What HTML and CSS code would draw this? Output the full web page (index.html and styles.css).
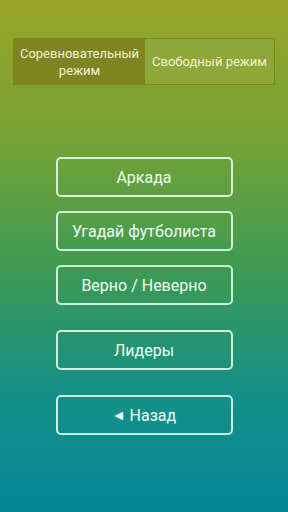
FILE: index.html
```html
<!DOCTYPE html>
<html lang="ru">
<head>
    <meta charset="UTF-8">
    <meta name="viewport" content="width=device-width, initial-scale=1.0">
    <title>Меню</title>
    <link rel="stylesheet" href="styles.css">
</head>
<body>
<div id="screen">
    <div id="modeSwitch">
        <button type="button" class="mode active">Соревновательный режим</button>
        <button type="button" class="mode">Свободный режим</button>
    </div>
    <div id="menu">
        <div class="group">
            <button type="button" class="btn">Аркада</button>
            <button type="button" class="btn">Угадай футболиста</button>
            <button type="button" class="btn">Верно / Неверно</button>
        </div>
        <div class="group">
            <button type="button" class="btn">Лидеры</button>
        </div>
        <div class="group">
            <button type="button" class="btn"><span class="arrow">&#9668;</span> Назад</button>
        </div>
    </div>
</div>
</body>
</html>
```

FILE: styles.css
```css
html, body {
    margin: 0;
    padding: 0;
}

#screen {
    width: 288px;
    height: 512px;
    box-sizing: border-box;
    padding: 38px 13px 0;
    background: linear-gradient(180deg, #99a526 0%, #74a236 28%, #3f9a52 52%, #169086 76%, #05879a 100%);
    font-family: Roboto, "Noto Sans", sans-serif;
}

#modeSwitch {
    display: grid;
    grid-template-columns: 131px 1fr;
    height: 47px;
    border: 1px solid rgba(110, 120, 20, 0.6);
    box-sizing: border-box;
}

.mode {
    padding: 0 2px;
    border: none;
    background: #8ea63a;
    color: #f2f3cf;
    font-family: inherit;
    font-size: 13px;
    line-height: 17px;
}
.mode.active {
    background: #7e8422;
}

#menu {
    display: flex;
    flex-direction: column;
    gap: 25px;
    width: 177px;
    margin: 72px auto 0;
}

.group {
    display: flex;
    flex-direction: column;
    gap: 14px;
}

.btn {
    height: 40px;
    border: 2px solid rgba(222, 250, 228, 0.9);
    border-radius: 5px;
    background: transparent;
    color: #eafff0;
    font-family: inherit;
    font-size: 16px;
}

.arrow {
    font-size: 14px;
    vertical-align: 1px;
}
```
